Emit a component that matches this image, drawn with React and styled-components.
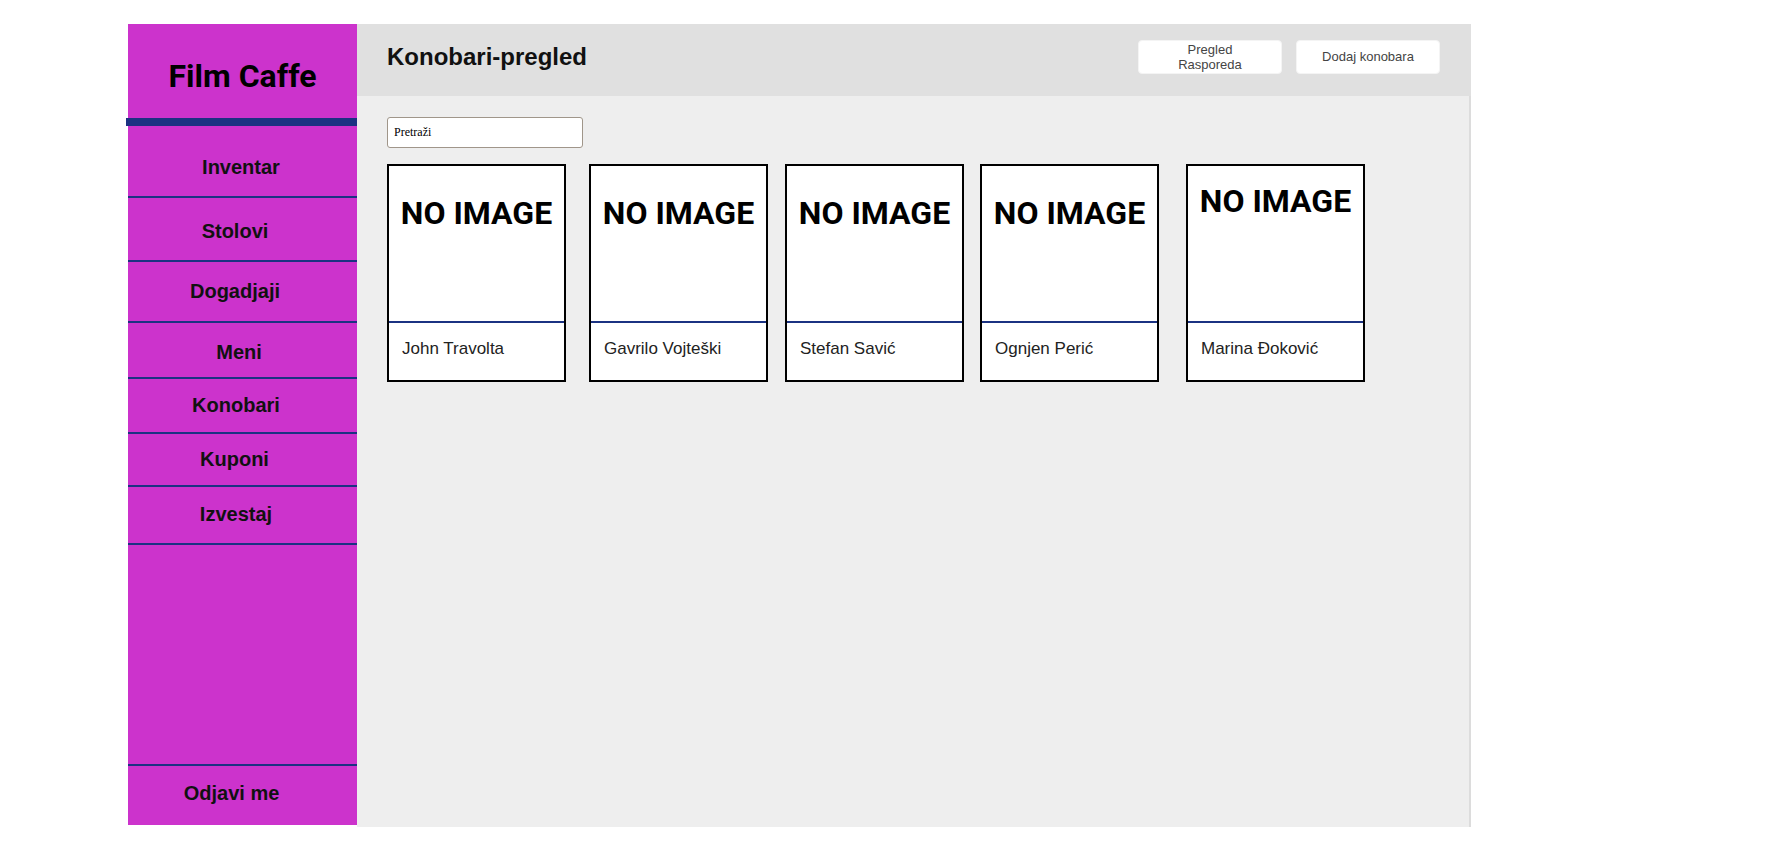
import React from 'react';
import styled, { createGlobalStyle } from 'styled-components';

const GlobalStyle = createGlobalStyle`
  body {
    margin: 0;
    background: #fff;
    font-family: 'Liberation Sans', Arial, sans-serif;
  }
`;

const Page = styled.div`
  display: flex;
  align-items: flex-start;
  padding: 24px 0 0 128px;
`;

// Sidebar
const Sidebar = styled.aside`
  width: 229px;
  height: 801px;
  background: #cc33cc;
  display: flex;
  flex-direction: column;
`;

const Brand = styled.div`
  height: 94px;
  box-sizing: border-box;
  padding-top: 34px;
  text-align: center;
  font-family: Roboto, 'Liberation Sans', sans-serif;
  font-weight: 700;
  font-size: 32px;
  line-height: 37px;
  color: #000;
`;

const BrandBar = styled.div`
  height: 8px;
  margin: 0 -1px 0 -2px;
  background: #1b3282;
`;

const NavItem = styled.div`
  height: ${(p) => p.$h}px;
  box-sizing: border-box;
  padding: ${(p) => p.$pt}px ${(p) => p.$pr}px 0 0;
  border-bottom: 2px solid #1b3282;
  text-align: center;
  font-weight: 700;
  font-size: 20px;
  line-height: 23px;
  color: #111;
  cursor: pointer;
`;

const Spacer = styled.div`
  flex: 1;
`;

const Logout = styled(NavItem)`
  border-bottom: none;
  border-top: 2px solid #1b3282;
`;

// Main column
const Main = styled.div`
  width: 1114px;
  height: 803px;
  background: #dcdcdc;
  display: flex;
  flex-direction: column;
`;

const Header = styled.header`
  height: 72px;
  box-sizing: border-box;
  background: #e0e0e0;
  display: flex;
  align-items: center;
  justify-content: space-between;
  padding: 0 31px 7px 30px;
`;

const Title = styled.h2`
  margin: 0;
  font-size: 24px;
  font-weight: 700;
  color: #111;
`;

const Actions = styled.div`
  display: flex;
  gap: 14px;
`;

const HeaderButton = styled.button`
  width: 144px;
  height: 34px;
  padding: 0 20px;
  background: #fff;
  border: 1px solid #f4f4f4;
  border-radius: 4px;
  font-family: 'Liberation Sans', Arial, sans-serif;
  font-size: 13px;
  line-height: 15px;
  color: #444;
  cursor: pointer;
`;

const Body = styled.main`
  flex: 1;
  margin-right: 2px;
  background: #eeeeee;
  padding: 21px 30px 0;
`;

const Search = styled.input`
  display: block;
  width: 196px;
  height: 31px;
  box-sizing: border-box;
  padding: 0 6px;
  border: 1px solid #a0968a;
  border-radius: 3px;
  background: #fff;
  font-family: 'Liberation Serif', 'Times New Roman', serif;
  font-size: 12px;
  color: #000;

  &::placeholder {
    color: #000;
  }
`;

const CardRow = styled.div`
  display: flex;
  margin-top: 16px;
`;

const Card = styled.div`
  width: 179px;
  height: 218px;
  box-sizing: border-box;
  margin-left: ${(p) => p.$gap}px;
  border: 2px solid #000;
  background: #fff;
  display: flex;
  flex-direction: column;
`;

const NoImage = styled.div`
  height: 157px;
  box-sizing: border-box;
  padding-top: ${(p) => p.$pt}px;
  border-bottom: 2px solid #1b3282;
  text-align: center;
  font-family: Roboto, 'Liberation Sans', sans-serif;
  font-weight: 700;
  font-size: 32px;
  line-height: 37px;
  color: #000;
`;

const Name = styled.div`
  padding: 16px 0 0 13px;
  font-size: 17px;
  line-height: 20px;
  color: #222;
`;

const navItems = [
  { label: 'Inventar', h: 72, pt: 30, pr: 3 },
  { label: 'Stolovi', h: 64, pt: 22, pr: 15 },
  { label: 'Dogadjaji', h: 61, pt: 18, pr: 15 },
  { label: 'Meni', h: 56, pt: 18, pr: 7 },
  { label: 'Konobari', h: 55, pt: 15, pr: 13 },
  { label: 'Kuponi', h: 53, pt: 14, pr: 16 },
  { label: 'Izvestaj', h: 58, pt: 16, pr: 13 },
];

const waiters = [
  { name: 'John Travolta', gap: 0, pt: 29 },
  { name: 'Gavrilo Vojteški', gap: 23, pt: 29 },
  { name: 'Stefan Savić', gap: 17, pt: 29 },
  { name: 'Ognjen Perić', gap: 16, pt: 29 },
  { name: 'Marina Đoković', gap: 27, pt: 17 },
];

export default function App() {
  return (
    <>
      <GlobalStyle />
      <Page>
        <Sidebar>
          <Brand>Film Caffe</Brand>
          <BrandBar />
          {navItems.map((item) => (
            <NavItem key={item.label} $h={item.h} $pt={item.pt} $pr={item.pr}>
              {item.label}
            </NavItem>
          ))}
          <Spacer />
          <Logout $h={61} $pt={16} $pr={22}>Odjavi me</Logout>
        </Sidebar>

        <Main>
          <Header>
            <Title>Konobari-pregled</Title>
            <Actions>
              <HeaderButton>Pregled Rasporeda</HeaderButton>
              <HeaderButton>Dodaj konobara</HeaderButton>
            </Actions>
          </Header>

          <Body>
            <Search type="text" placeholder="Pretraži" />
            <CardRow>
              {waiters.map((w) => (
                <Card key={w.name} $gap={w.gap}>
                  <NoImage $pt={w.pt}>NO IMAGE</NoImage>
                  <Name>{w.name}</Name>
                </Card>
              ))}
            </CardRow>
          </Body>
        </Main>
      </Page>
    </>
  );
}
